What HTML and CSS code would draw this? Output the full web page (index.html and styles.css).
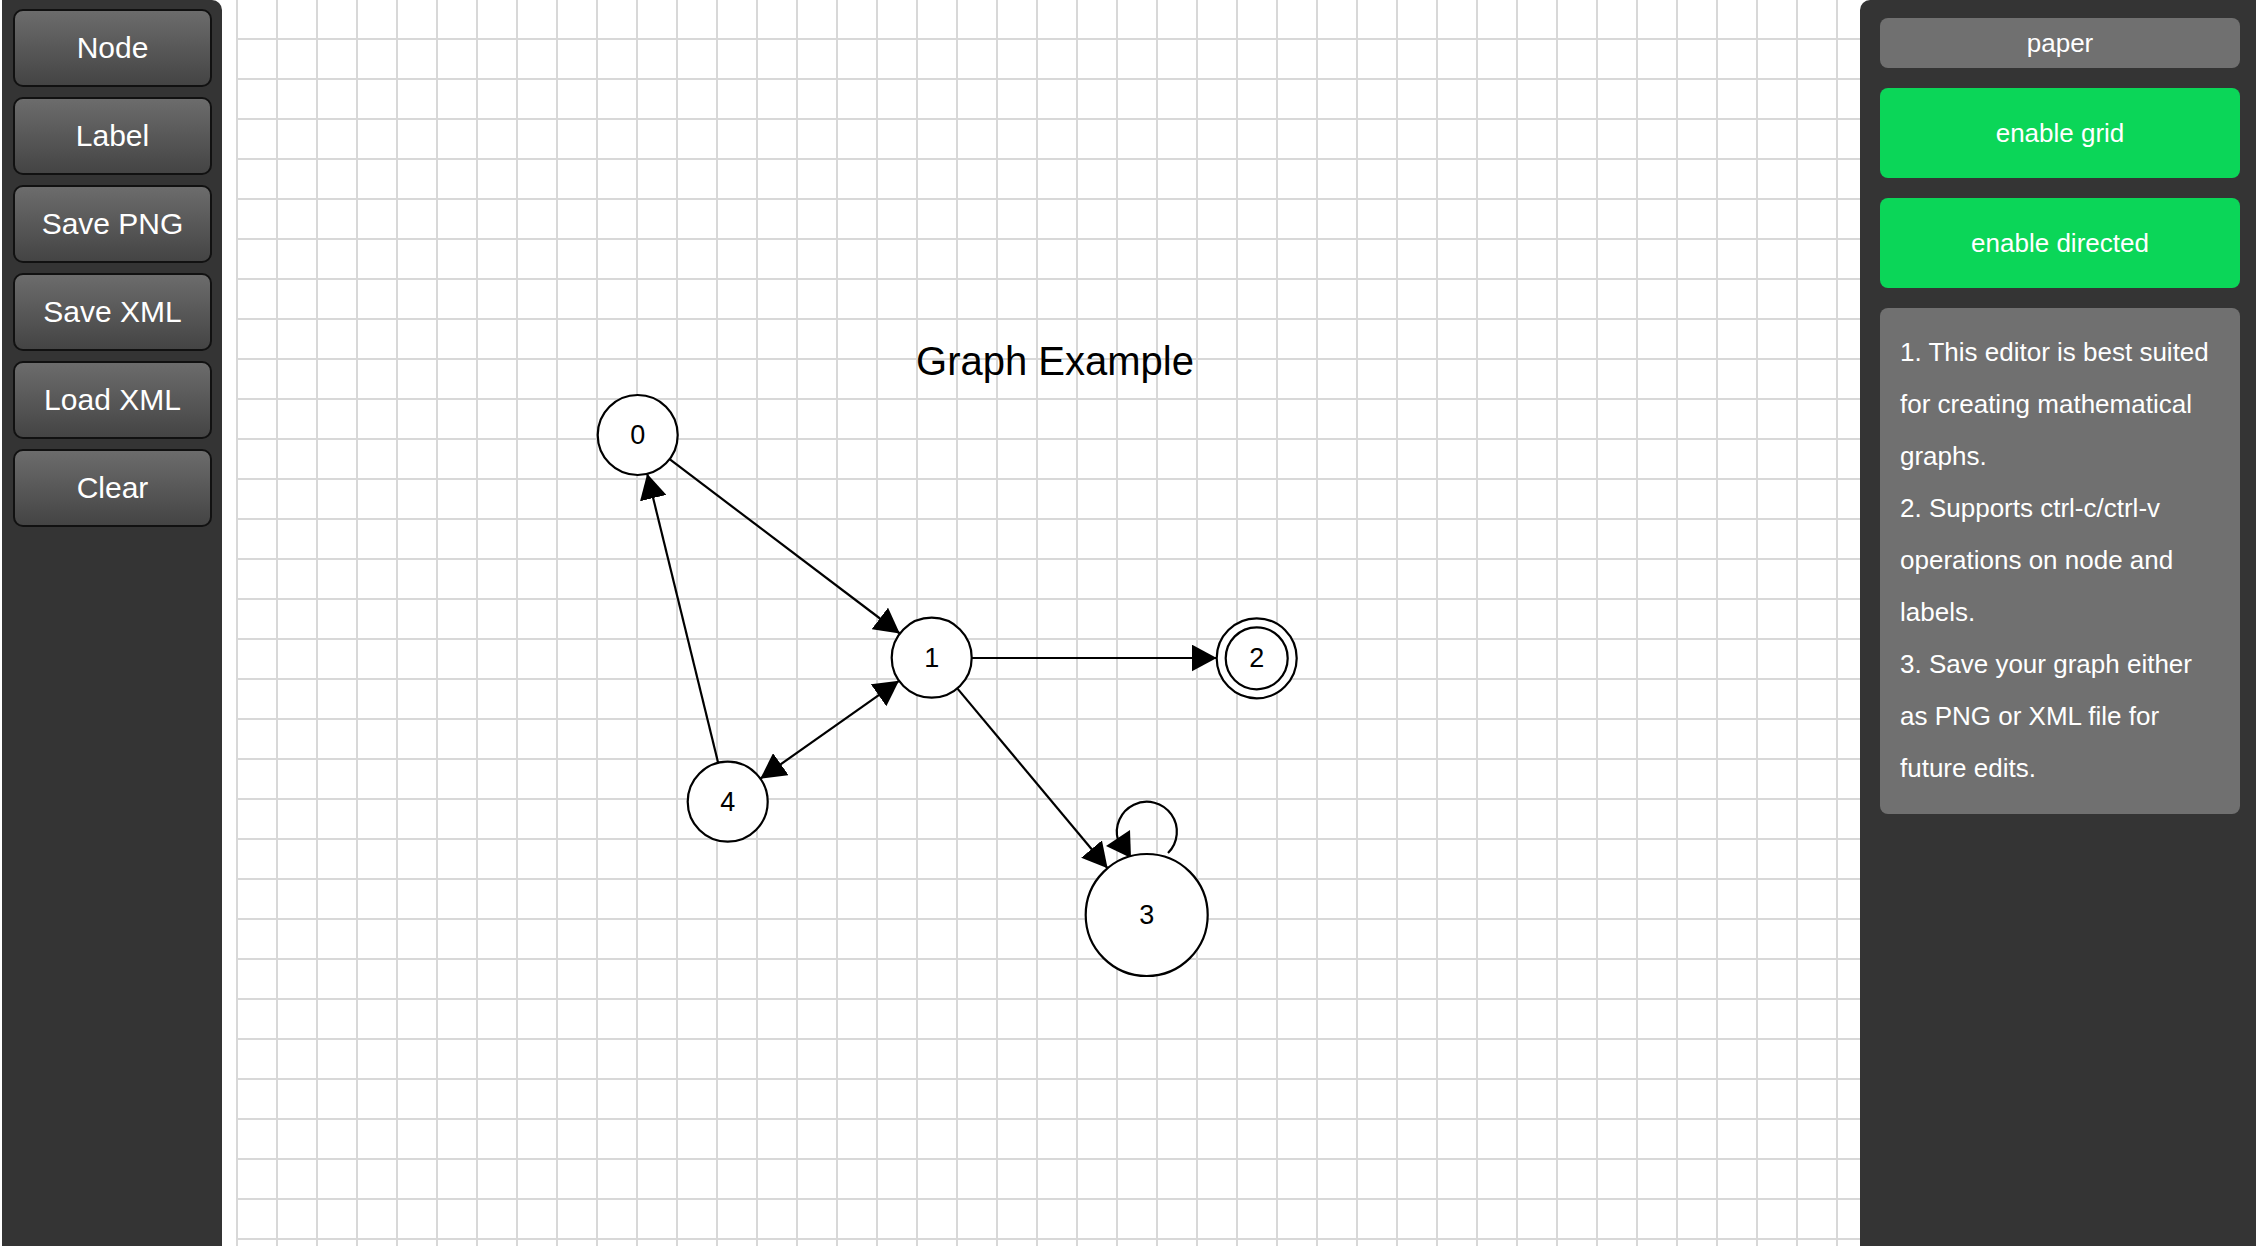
FILE: index.html
```html
<!DOCTYPE html>
<html lang="en">
<head>
  <meta charset="UTF-8" />
  <title>Graph Editor</title>
  <link rel="stylesheet" href="styles.css">
</head>

<body>
  <div class="app">
    <!-- Left toolbar -->
    <aside class="toolbar">
      <button class="tool-btn">Node</button>
      <button class="tool-btn">Label</button>
      <button class="tool-btn">Save PNG</button>
      <button class="tool-btn">Save XML</button>
      <button class="tool-btn">Load XML</button>
      <button class="tool-btn">Clear</button>
    </aside>

    <!-- Drawing paper -->
    <main class="paper">
      <svg class="graph" viewBox="236 0 1624 1246" xmlns="http://www.w3.org/2000/svg">
        <defs>
          <marker id="arrow" viewBox="0 0 25 27" refX="25" refY="13.5" markerWidth="25" markerHeight="27" markerUnits="userSpaceOnUse" orient="auto-start-reverse">
            <path d="M0,0 L25,13.5 L0,27 z" fill="#000" />
          </marker>
        </defs>

        <text class="graph-title" x="1055" y="375">Graph Example</text>

        <!-- edges -->
        <line class="edge" x1="669.6" y1="459.2" x2="899.8" y2="633.5" marker-end="url(#arrow)" />
        <line class="edge" x1="718.2" y1="762.9" x2="647.2" y2="473.8" marker-end="url(#arrow)" />
        <line class="edge" x1="760.4" y1="778.6" x2="899" y2="680.8" marker-start="url(#arrow)" marker-end="url(#arrow)" />
        <line class="edge" x1="971.7" y1="658" x2="1216.7" y2="658" marker-end="url(#arrow)" />
        <line class="edge" x1="957.3" y1="688.4" x2="1107.6" y2="868.2" marker-end="url(#arrow)" />

        <!-- self loop on node 3 -->
        <path class="edge" d="M1168,853 A30,30 0 1 0 1118,840" />
        <polygon points="1106,846 1130,830 1131,858" fill="#000" />

        <!-- nodes -->
        <g class="node">
          <circle cx="637.7" cy="435" r="40" />
          <text x="637.7" y="435">0</text>
        </g>
        <g class="node">
          <circle cx="931.7" cy="657.7" r="40" />
          <text x="931.7" y="657.7">1</text>
        </g>
        <g class="node">
          <circle cx="1256.7" cy="658.3" r="40" />
          <circle cx="1256.7" cy="658.3" r="31" />
          <text x="1256.7" y="658.3">2</text>
        </g>
        <g class="node">
          <circle cx="1146.7" cy="915" r="61" />
          <text x="1146.7" y="915">3</text>
        </g>
        <g class="node">
          <circle cx="727.7" cy="801.7" r="40" />
          <text x="727.7" y="801.7">4</text>
        </g>
      </svg>
    </main>

    <!-- Right settings panel -->
    <aside class="panel">
      <div class="panel-label">paper</div>
      <button class="toggle-btn">enable grid</button>
      <button class="toggle-btn">enable directed</button>
      <div class="help-box">
        <p>1. This editor is best suited for creating mathematical graphs.</p>
        <p>2. Supports ctrl-c/ctrl-v operations on node and labels.</p>
        <p>3. Save your graph either as PNG or XML file for future edits.</p>
      </div>
    </aside>
  </div>
</body>
</html>
```

FILE: styles.css
```css
* {
  margin: 0;
  padding: 0;
  box-sizing: border-box;
}
body {
  background-color: #fff;
  font-family: "Liberation Sans", Arial, sans-serif;
  color: #fff;
}
.app {
  display: flex;
  height: 100vh;
  overflow: hidden;
}
/* Left toolbar */
.toolbar {
  width: 220px;
  margin-left: 2px;
  flex-shrink: 0;
  background-color: #343434;
  border-top-right-radius: 10px;
  padding: 9px 10px 0 11px;
  display: flex;
  flex-direction: column;
  gap: 10px;
}
.tool-btn {
  height: 78px;
  width: 100%;
  border: 2px solid #111;
  border-radius: 10px;
  background: linear-gradient(#6c6c6c, #444);
  color: #fff;
  font-family: "Liberation Sans", Arial, sans-serif;
  font-size: 30px;
  cursor: pointer;
}
/* Drawing paper with grid */
.paper {
  flex: 1;
  margin-left: 14px;
  background-color: #fff;
  background-image:
    linear-gradient(90deg, #d8d8d8 2px, transparent 2px),
    linear-gradient(#d8d8d8 2px, transparent 2px);
  background-size: 40px 40px, 40px 40px;
  background-position: 0 0, 0 38px;
}
.graph {
  display: block;
  width: 100%;
  height: 100%;
}
.graph-title {
  font-family: "Liberation Sans", Arial, sans-serif;
  font-size: 40px;
  fill: #000;
  text-anchor: middle;
}
.edge {
  stroke: #000;
  stroke-width: 2.2;
  fill: none;
}
.node circle {
  fill: #fff;
  stroke: #000;
  stroke-width: 2.2;
}
.node text {
  font-family: "Liberation Sans", Arial, sans-serif;
  font-size: 27px;
  fill: #000;
  text-anchor: middle;
  dominant-baseline: central;
}
/* Right panel */
.panel {
  width: 396px;
  flex-shrink: 0;
  background-color: #343434;
  border-top-left-radius: 10px;
  padding: 18px 16px 0 20px;
  display: flex;
  flex-direction: column;
  gap: 20px;
}
.panel-label {
  height: 50px;
  background-color: #707070;
  border-radius: 8px;
  font-size: 26px;
  display: flex;
  align-items: center;
  justify-content: center;
}
.toggle-btn {
  height: 90px;
  border: none;
  border-radius: 8px;
  background-color: #0bd658;
  color: #fff;
  font-family: "Liberation Sans", Arial, sans-serif;
  font-size: 26px;
  cursor: pointer;
}
.help-box {
  background-color: #707070;
  border-radius: 8px;
  padding: 18px 20px 20px 20px;
  font-size: 26px;
  line-height: 52px;
}
```
